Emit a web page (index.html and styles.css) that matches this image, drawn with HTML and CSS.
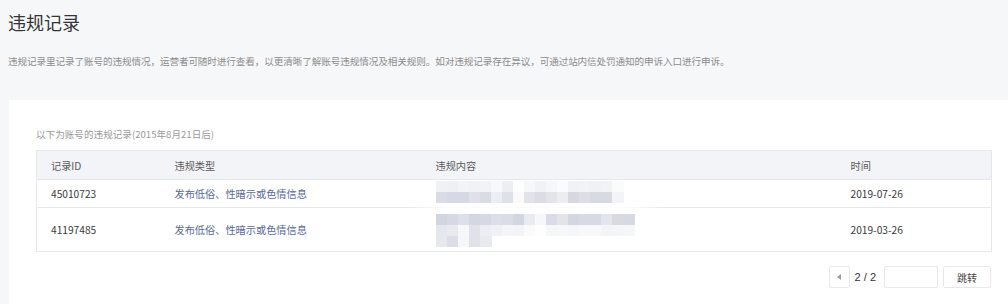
FILE: index.html
```html
<!DOCTYPE html>
<html lang="zh-CN">
<head>
<meta charset="utf-8">
<title>违规记录</title>
<link rel="stylesheet" href="styles.css">
</head>
<body>
<div class="page">
  <h1 class="title">违规记录</h1>
  <p class="desc">违规记录里记录了账号的违规情况，运营者可随时进行查看，以更清晰了解账号违规情况及相关规则。如对违规记录存在异议，可通过站内信处罚通知的申诉入口进行申诉。</p>
  <div class="card">
    <p class="caption">以下为账号的违规记录(2015年8月21日后)</p>
    <table class="records">
      <colgroup>
        <col class="c-id"><col class="c-type"><col class="c-content"><col class="c-time">
      </colgroup>
      <thead>
        <tr><th>记录ID</th><th>违规类型</th><th>违规内容</th><th>时间</th></tr>
      </thead>
      <tbody>
        <tr class="row-short">
          <td>45010723</td>
          <td class="type">发布低俗、性暗示或色情信息</td>
          <td class="content">
            <svg class="mosaic" width="200" height="22" viewBox="0 0 200 22">
              <g>
                <rect x="0" y="0" width="12" height="11" fill="#f0f1f4"/>
                <rect x="11" y="0" width="12" height="11" fill="#eef0f3"/>
                <rect x="22" y="0" width="12" height="11" fill="#f3f4f6"/>
                <rect x="33" y="0" width="12" height="11" fill="#f1f2f5"/>
                <rect x="44" y="0" width="12" height="11" fill="#f2f3f6"/>
                <rect x="55" y="0" width="12" height="11" fill="#f8f8fa"/>
                <rect x="66" y="0" width="12" height="11" fill="#eceef2"/>
                <rect x="77" y="0" width="12" height="11" fill="#fefefe"/>
                <rect x="88" y="0" width="12" height="11" fill="#f6f7f9"/>
                <rect x="99" y="0" width="12" height="11" fill="#f1f2f5"/>
                <rect x="110" y="0" width="12" height="11" fill="#f6f7f9"/>
                <rect x="121" y="0" width="12" height="11" fill="#fafbfc"/>
                <rect x="132" y="0" width="12" height="11" fill="#f1f2f4"/>
                <rect x="143" y="0" width="12" height="11" fill="#f2f3f5"/>
                <rect x="154" y="0" width="12" height="11" fill="#f0f1f4"/>
                <rect x="165" y="0" width="12" height="11" fill="#f2f3f5"/>
                <rect x="176" y="0" width="12" height="11" fill="#fbfbfc"/>
              </g>
              <g>
                <rect x="0" y="11" width="12" height="11" fill="#d9dce5"/>
                <rect x="11" y="11" width="12" height="11" fill="#d6d9e3"/>
                <rect x="22" y="11" width="12" height="11" fill="#d5d9e3"/>
                <rect x="33" y="11" width="12" height="11" fill="#dfe1e7"/>
                <rect x="44" y="11" width="12" height="11" fill="#d9dce4"/>
                <rect x="55" y="11" width="12" height="11" fill="#eceef1"/>
                <rect x="66" y="11" width="12" height="11" fill="#dfe1e8"/>
                <rect x="77" y="11" width="12" height="11" fill="#fbf9f9"/>
                <rect x="88" y="11" width="12" height="11" fill="#e1e3e9"/>
                <rect x="99" y="11" width="12" height="11" fill="#dbdde6"/>
                <rect x="110" y="11" width="12" height="11" fill="#e2e4ea"/>
                <rect x="121" y="11" width="12" height="11" fill="#ecedf0"/>
                <rect x="132" y="11" width="12" height="11" fill="#d6d8e1"/>
                <rect x="143" y="11" width="12" height="11" fill="#dcdde5"/>
                <rect x="154" y="11" width="12" height="11" fill="#d7dae2"/>
                <rect x="165" y="11" width="12" height="11" fill="#d7dae2"/>
                <rect x="176" y="11" width="12" height="11" fill="#f3f4f8"/>
              </g>
            </svg>
          </td>
          <td>2019-07-26</td>
        </tr>
        <tr class="row-tall">
          <td>41197485</td>
          <td class="type">发布低俗、性暗示或色情信息</td>
          <td class="content">
            <span class="fade"></span>
            <svg class="mosaic" width="210" height="33" viewBox="0 0 210 33">
              <g>
                <rect x="0" y="0" width="12" height="11" fill="#d0d5e1"/>
                <rect x="11" y="0" width="12" height="11" fill="#d6d9e3"/>
                <rect x="22" y="0" width="12" height="11" fill="#dce0e8"/>
                <rect x="33" y="0" width="12" height="11" fill="#d3d7e2"/>
                <rect x="44" y="0" width="12" height="11" fill="#d5d9e4"/>
                <rect x="55" y="0" width="12" height="11" fill="#dcdfe7"/>
                <rect x="66" y="0" width="12" height="11" fill="#dadde6"/>
                <rect x="77" y="0" width="12" height="11" fill="#d2d6e1"/>
                <rect x="88" y="0" width="12" height="11" fill="#e8ebf0"/>
                <rect x="99" y="0" width="12" height="11" fill="#f6f7f9"/>
                <rect x="110" y="0" width="12" height="11" fill="#d9dce6"/>
                <rect x="121" y="0" width="12" height="11" fill="#e4e3e7"/>
                <rect x="132" y="0" width="12" height="11" fill="#d4d6e1"/>
                <rect x="143" y="0" width="12" height="11" fill="#d7d9e3"/>
                <rect x="154" y="0" width="12" height="11" fill="#d7d9e3"/>
                <rect x="165" y="0" width="12" height="11" fill="#e3e5ec"/>
                <rect x="176" y="0" width="12" height="11" fill="#d8d9e1"/>
                <rect x="187" y="0" width="12" height="11" fill="#d6d9e2"/>
              </g>
              <g>
                <rect x="0" y="11" width="12" height="11" fill="#e5e7ee"/>
                <rect x="11" y="11" width="12" height="11" fill="#e9eaef"/>
                <rect x="22" y="11" width="12" height="11" fill="#f6f7f9"/>
                <rect x="33" y="11" width="12" height="11" fill="#e0e2ea"/>
                <rect x="44" y="11" width="12" height="11" fill="#eceef2"/>
                <rect x="55" y="11" width="12" height="11" fill="#f0f1f4"/>
                <rect x="66" y="11" width="12" height="11" fill="#f4f5f7"/>
                <rect x="77" y="11" width="12" height="11" fill="#f3f4f7"/>
                <rect x="88" y="11" width="12" height="11" fill="#fafafb"/>
                <rect x="99" y="11" width="12" height="11" fill="#fefefe"/>
                <rect x="110" y="11" width="12" height="11" fill="#f5f6f8"/>
                <rect x="121" y="11" width="12" height="11" fill="#f6f7f9"/>
                <rect x="132" y="11" width="12" height="11" fill="#f5f6f9"/>
                <rect x="143" y="11" width="12" height="11" fill="#f7f8fa"/>
                <rect x="154" y="11" width="12" height="11" fill="#f7f8fa"/>
                <rect x="165" y="11" width="12" height="11" fill="#f3f4f7"/>
                <rect x="176" y="11" width="12" height="11" fill="#f4f5f8"/>
                <rect x="187" y="11" width="12" height="11" fill="#f5f6f8"/>
              </g>
              <g>
                <rect x="0" y="22" width="12" height="11" fill="#e6e8ee"/>
                <rect x="11" y="22" width="12" height="11" fill="#dbdee7"/>
                <rect x="22" y="22" width="12" height="11" fill="#f5f6f8"/>
                <rect x="33" y="22" width="12" height="11" fill="#dfe2ea"/>
                <rect x="44" y="22" width="12" height="11" fill="#e8eaf0"/>
              </g>
            </svg>
          </td>
          <td>2019-03-26</td>
        </tr>
      </tbody>
    </table>
    <div class="pager">
      <button class="pager-prev" type="button" aria-label="上一页"><span class="tri"></span></button>
      <span class="pager-count">2 / 2</span>
      <input class="pager-input" type="text">
      <button class="pager-go" type="button">跳转</button>
    </div>
  </div>
</div>
</body>
</html>
```

FILE: styles.css
```css
html, body {
  margin: 0;
  padding: 0;
  background: #f6f7f9;
  font-family: "Noto Sans CJK SC", "Liberation Sans", sans-serif;
  color: #333;
  overflow: hidden;
}

.page {
  padding-left: 8px;
}

.title {
  margin: 0;
  padding-top: 11px;
  font-size: 18px;
  line-height: 22px;
  font-weight: normal;
  color: #353535;
}

.desc {
  margin: 21px 0 0;
  font-size: 9.6px;
  letter-spacing: -0.1px;
  line-height: 14px;
  color: #8c8c8c;
  white-space: nowrap;
}

.card {
  margin-top: 32px;
  margin-left: 1px;
  background: #fff;
  padding: 27px 17px 20px 27px;
  height: 204px;
  box-sizing: border-box;
}

.caption {
  margin: 0 0 9px;
  font-size: 9.6px;
  line-height: 14px;
  color: #9a9a9a;
}

.records {
  width: 955px;
  border-collapse: collapse;
  table-layout: fixed;
  border: 1px solid #e6e7ea;
  font-size: 10.2px;
}

.c-id { width: 124px; }
.c-type { width: 261px; }
.c-content { width: 415px; }
.c-time { width: 155px; }

.records th {
  background: #f3f4f7;
  font-weight: normal;
  text-align: left;
  color: #5a5a5a;
  height: 28px;
  padding: 0 14px;
  border-bottom: 1px solid #e6e7ea;
}

.records td {
  padding: 0 14px;
  color: #3a3a3a;
  vertical-align: middle;
  border-bottom: 1px solid #e6e7ea;
}

.row-short td { height: 27px; }
.row-tall td { height: 43px; }

.records td.type {
  color: #56699b;
}

.records td.content {
  position: relative;
}

.mosaic {
  display: block;
}

.row-short .mosaic {
  margin-top: -4px;
}

.row-tall .mosaic {
  margin-top: 2px;
}

.fade {
  position: absolute;
  left: -16px;
  top: -3px;
  width: 260px;
  height: 5px;
  background: linear-gradient(to right, rgba(255,255,255,0), rgba(255,255,255,0.85) 15%, rgba(255,255,255,0.85) 85%, rgba(255,255,255,0));
}

.pager {
  display: flex;
  justify-content: flex-end;
  align-items: center;
  margin-top: 14px;
  width: 955px;
}

.pager-prev {
  width: 21px;
  height: 22px;
  box-sizing: border-box;
  border: 1px solid #e8e8e8;
  background: #fff;
  border-radius: 2px;
  padding: 0;
  display: flex;
  align-items: center;
  justify-content: center;
}

.tri {
  width: 0;
  height: 0;
  border-top: 3.5px solid transparent;
  border-bottom: 3.5px solid transparent;
  border-right: 4px solid #9a9a9a;
}

.pager-count {
  margin-left: 5px;
  font-family: "Liberation Sans", sans-serif;
  font-size: 11px;
  color: #333;
}

.pager-input {
  margin-left: 8px;
  width: 54px;
  height: 22px;
  box-sizing: border-box;
  border: 1px solid #e8e8e8;
  border-radius: 2px;
  padding: 0 4px;
  outline: none;
}

.pager-go {
  margin-left: 5px;
  width: 48px;
  height: 22px;
  box-sizing: border-box;
  border: 1px solid #e8e8e8;
  border-radius: 2px;
  background: #fff;
  font-family: "Noto Sans CJK SC", sans-serif;
  font-size: 10px;
  color: #444;
  padding: 0;
}
```
